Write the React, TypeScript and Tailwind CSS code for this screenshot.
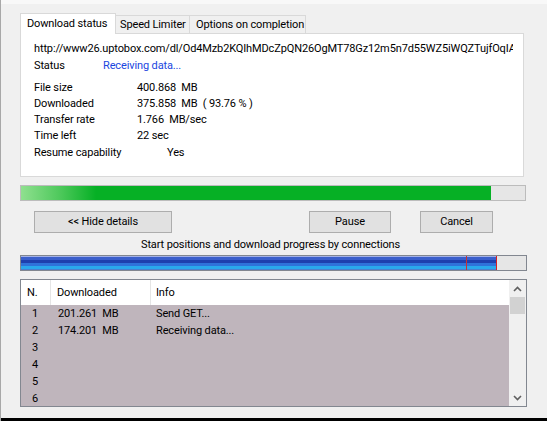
import React from 'react';

const rows = [
    { n: '1', size: '201.261  MB', info: 'Send GET...' },
    { n: '2', size: '174.201  MB', info: 'Receiving data...' },
    { n: '3', size: '', info: '' },
    { n: '4', size: '', info: '' },
    { n: '5', size: '', info: '' },
    { n: '6', size: '', info: '' },
];

const details = [
    { label: 'File size', value: '400.868  MB' },
    { label: 'Downloaded', value: '375.858  MB  ( 93.76 % )' },
    { label: 'Transfer rate', value: '1.766  MB/sec' },
    { label: 'Time left', value: '22 sec' },
];

const Chevron = ({ up }: { up?: boolean }) => (
    <svg aria-hidden="true" className="h-[6px] w-[9px]" viewBox="0 0 9 6" fill="none">
        <polyline
            points={up ? '1,5 4.5,1.5 8,5' : '1,1 4.5,4.5 8,1'}
            stroke="#5f5f5f"
            strokeWidth="1.6"
        />
    </svg>
);

const WinButton = ({ label, className }: { label: string; className: string }) => (
    <div
        className={`flex h-[22px] items-center justify-center border border-[#adadad] bg-[#e1e1e1] ${className}`}
    >
        {label}
    </div>
);

export default function App() {
    return (
        <div className="relative flex h-[421px] w-[547px] flex-col overflow-hidden border-l border-[#a8a8a8] bg-[#f0f0f0] font-['Roboto',sans-serif] text-[11px] leading-4 tracking-[-0.13px] text-black">
            <div className="h-[4px] bg-[#f8f8f8]" />
            <div className="flex-1 pl-[19px] pt-[9px]">
                {/* tabs */}
                <div className="flex h-[20px] items-end whitespace-nowrap">
                    <div className="relative z-10 -mb-px h-[21px] w-[96px] border border-b-0 border-[#d9d9d9] bg-white pl-[6px] pt-[2px]">
                        Download status
                    </div>
                    <div className="h-[18px] w-[74px] border border-b-0 border-l-0 border-[#d9d9d9] pl-[4px] pt-[1px]">
                        Speed Limiter
                    </div>
                    <div className="h-[18px] w-[116px] border border-b-0 border-l-0 border-[#d9d9d9] pl-[6px] pt-[1px]">
                        Options on completion
                    </div>
                </div>

                {/* tab panel */}
                <div className="h-[144px] w-[504px] border border-[#d9d9d9] bg-white pl-[13px] pr-[10px] pt-[7px]">
                    <div className="overflow-hidden whitespace-nowrap">
                        http://www26.uptobox.com/dl/Od4Mzb2KQIhMDcZpQN26OgMT78Gz12m5n7d55WZ5iWQZTujfOqIA
                    </div>
                    <div className="mt-px flex">
                        <span className="w-[69px]">Status</span>
                        <span className="text-[#1a46e0]">Receiving data...</span>
                    </div>
                    <div className="mt-[6px]">
                        {details.map((d) => (
                            <div key={d.label} className="flex">
                                <span className="w-[103px]">{d.label}</span>
                                <span className="whitespace-pre">{d.value}</span>
                            </div>
                        ))}
                        <div className="mt-px flex">
                            <span className="w-[103px]">Resume capability</span>
                            <span className="pl-[30px]">Yes</span>
                        </div>
                    </div>
                </div>

                {/* total progress */}
                <div className="mt-[8px] flex h-[16px] w-[506px] border border-[#bcbcbc] bg-[#e6e6e6]">
                    <div className="h-full w-[470px] bg-[linear-gradient(to_right,#8fe08f_0px,#4cc85a_40px,#06b025_75px,#06b025_100%)]" />
                </div>

                {/* buttons */}
                <div className="mt-[10px] flex">
                    <WinButton label="<< Hide details" className="ml-[14px] w-[138px]" />
                    <WinButton label="Pause" className="ml-[137px] w-[82px]" />
                    <WinButton label="Cancel" className="ml-[29px] w-[73px]" />
                </div>

                <div className="mt-[4px] h-[16px] pl-[121px]">
                    Start positions and download progress by connections
                </div>

                {/* connections progress */}
                <div className="mt-[2px] flex h-[16px] w-[507px] border border-[#828790] bg-[#e6e6e6]">
                    <div className="relative h-full w-[476px] bg-[linear-gradient(to_bottom,#a4b2e6_0px,#a4b2e6_1px,#3b5fcc_1px,#3b5fcc_4px,#1e3fae_4px,#1e3fae_7px,#2f72da_7px,#2f72da_10px,#2aa8ec_10px,#2aa8ec_13px,#4a7fd0_13px)]">
                        <div className="absolute left-[445px] top-0 h-full w-px bg-[#c83232]" />
                        <div className="absolute right-0 top-0 h-full w-px bg-[#d82020]" />
                    </div>
                </div>

                {/* connections list */}
                <div className="mt-[8px] flex h-[128px] w-[507px] overflow-hidden border border-[#828790] bg-white">
                    <div className="w-[488px]">
                        <div className="grid h-[25px] w-[481px] grid-cols-[30px_100px_1fr] items-center bg-white">
                            <span className="h-full border-r border-[#e5e5e5] pl-[6px] leading-[25px]">N.</span>
                            <span className="h-full border-r border-[#e5e5e5] pl-[6px] leading-[25px]">Downloaded</span>
                            <span className="pl-[5px]">Info</span>
                        </div>
                        <div className="bg-[#bfb5bc]">
                            {rows.map((r) => (
                                <div key={r.n} className="grid h-[17px] grid-cols-[30px_100px_1fr] items-center">
                                    <span className="pl-[11px]">{r.n}</span>
                                    <span className="whitespace-pre pl-[7px]">{r.size}</span>
                                    <span className="pl-[5px]">{r.info}</span>
                                </div>
                            ))}
                        </div>
                    </div>
                    <div className="flex w-[17px] flex-col items-center bg-[#f0f0f0]">
                        <div className="flex h-[17px] items-center">
                            <Chevron up />
                        </div>
                        <div className="h-[17px] w-[15px] bg-[#d2d2d2]" />
                        <div className="flex-1" />
                        <div className="flex h-[17px] items-center">
                            <Chevron />
                        </div>
                    </div>
                </div>
            </div>
            <div className="h-[3px] bg-black" />
        </div>
    );
}
